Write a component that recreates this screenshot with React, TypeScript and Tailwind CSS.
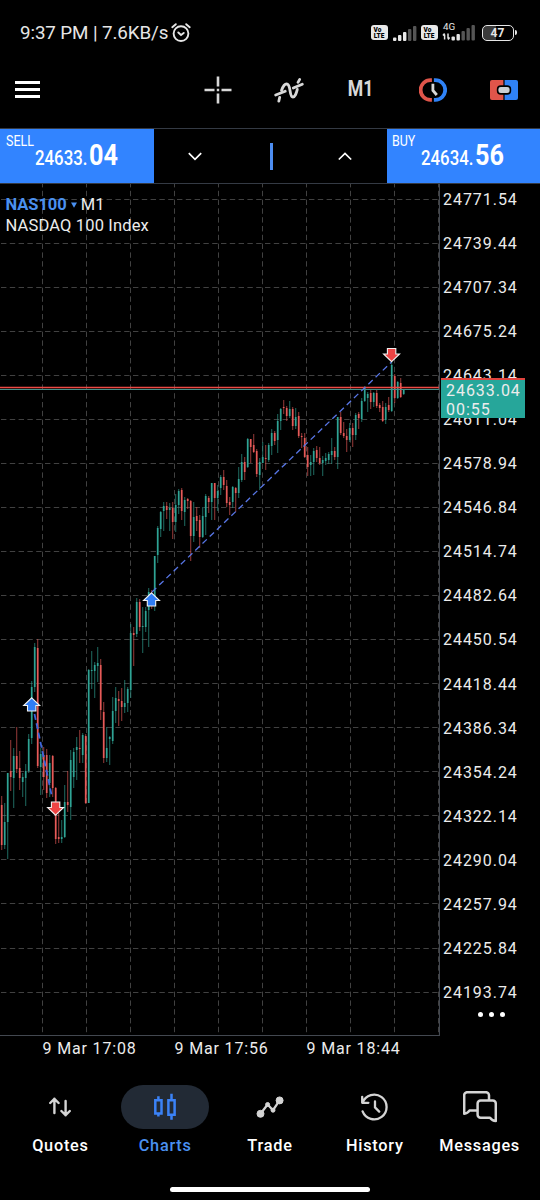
import type { ReactNode } from "react";

type Candle = ["u" | "d", number, number, number, number];

// direction, high, body top, body bottom, low
const CANDLES: Candle[] = [
  ["d", 796, 805, 845, 850], ["u", 803, 822, 845, 849], ["u", 773, 773, 822, 859],
  ["d", 740, 771, 777, 791], ["u", 748, 756, 778, 808], ["d", 727, 756, 769, 773],
  ["d", 751, 768, 778, 790], ["u", 773, 777, 782, 797], ["u", 764, 771, 778, 806],
  ["u", 734, 739, 771, 773], ["u", 681, 687, 738, 744], ["u", 643, 647, 687, 692],
  ["d", 639, 648, 766, 768], ["u", 748, 754, 767, 795], ["d", 747, 755, 777, 790],
  ["d", 749, 755, 793, 798], ["u", 755, 763, 783, 797], ["d", 755, 756, 788, 797],
  ["d", 787, 788, 839, 844], ["d", 813, 837, 839, 843], ["u", 820, 837, 839, 843],
  ["u", 785, 802, 837, 838], ["d", 771, 802, 805, 812], ["u", 750, 760, 807, 820],
  ["u", 748, 752, 777, 788], ["u", 737, 747, 750, 780], ["d", 730, 748, 749, 763],
  ["u", 733, 735, 755, 763], ["d", 734, 736, 803, 804], ["u", 669, 670, 803, 803],
  ["u", 651, 670, 671, 689], ["u", 662, 665, 671, 698], ["u", 647, 663, 666, 682],
  ["d", 659, 665, 710, 720], ["d", 702, 712, 758, 763], ["u", 727, 748, 758, 762],
  ["u", 736, 737, 739, 765], ["u", 697, 711, 741, 744], ["u", 687, 698, 711, 723],
  ["d", 691, 699, 701, 726], ["d", 688, 701, 707, 721], ["u", 680, 703, 707, 713],
  ["u", 687, 689, 703, 712], ["u", 624, 633, 690, 698], ["d", 627, 633, 635, 666],
  ["u", 598, 602, 634, 637], ["d", 599, 602, 627, 631], ["u", 607, 626, 627, 653],
  ["u", 607, 611, 627, 632], ["u", 588, 592, 610, 647], ["d", 590, 595, 606, 609],
  ["u", 556, 556, 606, 611], ["u", 526, 528, 555, 563], ["u", 511, 512, 529, 537],
  ["u", 502, 506, 511, 531], ["d", 502, 506, 510, 519], ["u", 503, 508, 510, 531],
  ["d", 502, 508, 522, 539], ["u", 494, 505, 522, 532], ["u", 489, 491, 505, 514],
  ["d", 488, 490, 511, 520], ["u", 497, 500, 512, 526], ["d", 498, 499, 501, 509],
  ["d", 500, 501, 536, 561], ["u", 502, 517, 536, 542], ["d", 507, 516, 521, 531],
  ["d", 515, 520, 537, 548], ["u", 507, 516, 537, 538], ["u", 494, 496, 517, 535],
  ["d", 496, 498, 502, 513], ["u", 483, 483, 502, 520], ["d", 483, 483, 498, 520],
  ["u", 485, 491, 498, 511], ["u", 475, 477, 488, 495], ["d", 470, 477, 485, 490],
  ["d", 480, 486, 503, 507], ["d", 497, 502, 505, 515], ["u", 486, 487, 502, 508],
  ["d", 487, 488, 493, 512], ["u", 467, 479, 493, 498], ["u", 454, 462, 480, 482],
  ["d", 457, 462, 472, 480], ["u", 438, 439, 467, 468], ["d", 439, 439, 447, 463],
  ["d", 434, 445, 452, 453], ["d", 449, 451, 474, 477], ["u", 458, 462, 475, 490],
  ["u", 442, 457, 463, 463], ["d", 445, 458, 459, 470], ["u", 443, 445, 460, 462],
  ["u", 429, 433, 446, 455], ["d", 431, 433, 441, 445], ["u", 414, 421, 440, 453],
  ["u", 408, 409, 421, 430], ["d", 400, 407, 408, 414], ["d", 406, 408, 416, 421],
  ["u", 401, 409, 416, 418], ["d", 407, 409, 426, 430], ["u", 408, 417, 426, 429],
  ["d", 412, 416, 436, 438], ["d", 433, 436, 437, 448], ["d", 433, 438, 457, 458],
  ["d", 447, 455, 467, 476], ["u", 455, 462, 465, 476], ["u", 448, 451, 462, 475],
  ["d", 446, 450, 458, 462], ["d", 447, 458, 463, 465], ["u", 456, 460, 463, 476],
  ["u", 453, 458, 461, 465], ["u", 452, 454, 460, 464], ["u", 438, 451, 455, 464],
  ["d", 447, 451, 457, 460], ["u", 417, 417, 457, 469], ["d", 412, 417, 433, 435],
  ["d", 422, 433, 436, 438], ["d", 429, 436, 440, 452], ["u", 423, 428, 440, 442],
  ["d", 423, 428, 435, 447], ["u", 413, 415, 435, 440], ["d", 412, 414, 418, 429],
  ["u", 398, 401, 419, 422], ["u", 386, 388, 401, 402], ["u", 392, 394, 398, 412],
  ["d", 390, 393, 402, 409], ["u", 392, 393, 402, 407], ["d", 389, 393, 406, 408],
  ["d", 403, 405, 408, 412], ["d", 401, 407, 421, 422], ["u", 403, 407, 420, 424],
  ["d", 397, 405, 410, 412], ["u", 361, 365, 411, 412], ["d", 374, 376, 398, 403],
  ["u", 381, 382, 398, 399], ["d", 378, 383, 397, 398], ["u", 389, 390, 394, 395],
];

const GRID_X = [42.5, 86.5, 130.5, 174.5, 218.5, 262.5, 306.5, 350.5, 394.5, 438.5];

const PRICES = [
  "24771.54", "24739.44", "24707.34", "24675.24", "24643.14", "24611.04", "24578.94",
  "24546.84", "24514.74", "24482.64", "24450.54", "24418.44", "24386.34", "24354.24",
  "24322.14", "24290.04", "24257.94", "24225.84", "24193.74",
];

function Signal({ level, className }: { level: number; className?: string }) {
  return (
    <svg width="24" height="16" viewBox="0 0 24 16" className={className}>
      {[3.5, 6, 9, 12, 15].map((h, i) => (
        <rect key={i} x={i * 5} y={16 - h} width="3.4" height={h} rx="1" fill={i < level ? "#e8e8e8" : "#555"} />
      ))}
    </svg>
  );
}

function VoLte() {
  return (
    <div className="flex h-[15px] w-[17px] flex-col items-center justify-center rounded-[3px] bg-[#e8e8e8] text-[6.5px] leading-[6px] font-black text-black">
      <span className="-ml-[3px]">Vo</span>
      <span>LTE</span>
    </div>
  );
}

function StatusBar() {
  return (
    <div className="flex h-[65px] items-center justify-between pl-5 pr-[23.5px] text-[#e6e6e6]">
      <div className="flex items-center pt-px">
        <span className="text-[18.8px] tracking-[-0.1px]">9:37 PM | 7.6KB/s</span>
        <svg width="20" height="20" viewBox="0 0 20 20" className="ml-[3px]" fill="none" stroke="currentColor" strokeWidth="1.9" strokeLinecap="round">
          <circle cx="10" cy="10.6" r="7.4" />
          <path d="M1.3 4.2 4.8 1.2M18.7 4.2 15.2 1.2M7.3 9.5 10 12l2.7-2.1" />
        </svg>
      </div>
      <div className="flex items-center">
        <VoLte />
        <Signal level={3} className="ml-[5px]" />
        <div className="ml-[4px]">
          <VoLte />
        </div>
        <svg width="35" height="20" viewBox="0 0 35 20" className="-mt-[3px] ml-[4px]">
          <text x="1" y="9" fontSize="9.8" fill="#e6e6e6">4G</text>
          <path d="M2.6 18.5v-5M1 14.5l1.6-2M6 12.5v5M6 18.5l1.6-2" stroke="#e6e6e6" strokeWidth="1.5" fill="none" />
          <rect x="9.5" y="15.5" width="3.4" height="4" rx="1" fill="#e6e6e6" />
          <rect x="14.5" y="13" width="3.4" height="6.5" rx="1" fill="#e6e6e6" />
          <rect x="19.5" y="10" width="3.4" height="9.5" rx="1" fill="#555" />
          <rect x="24.5" y="7" width="3.4" height="12.5" rx="1" fill="#555" />
          <rect x="29.5" y="4" width="3.4" height="15.5" rx="1" fill="#555" />
        </svg>
        <div className="ml-[5px] flex h-4 w-[32px] items-center justify-center rounded-[5px] border-[1.5px] border-[#e6e6e6] bg-linear-to-r from-[#3a3a3a] from-45% to-black to-45% text-[12px] leading-none font-bold">
          47
        </div>
        <div className="ml-px h-[5px] w-[2px] rounded-r bg-[#e6e6e6]" />
      </div>
    </div>
  );
}

function Toolbar() {
  return (
    <div className="flex h-[63px] items-center pb-[14px] text-[#d8d8d8]">
      <div className="flex w-[182px] pl-[15px]">
        <div className="flex w-[25px] flex-col gap-[4px]">
          <div className="h-[3px] bg-white" />
          <div className="h-[3px] bg-white" />
          <div className="h-[3px] bg-white" />
        </div>
      </div>
      <div className="grid flex-1 grid-cols-5 place-items-center">
        <svg width="28" height="28" viewBox="0 0 28 28" fill="none" stroke="currentColor" strokeWidth="2.6">
          <path d="M14 .5v10M14 17.5v10M.5 14h10M17.5 14h10M12.8 14h2.4" />
        </svg>
        <svg width="30" height="26" viewBox="0 0 30 26" fill="none" stroke="currentColor" strokeWidth="2.8" strokeLinecap="round" strokeLinejoin="round">
          <path d="M1.7 18 11.2 14.3M19.3 11 28.3 7.2" />
          <path d="M4.8 24.2 5.7 20.3M7.5 13.5C9 9.2 10.8 7 12.6 7c4.8 0 2.3 13 6.3 13 2.4 0 3.3-3.6 4.4-7.6M24 5.4l1.7-3" />
        </svg>
        <span className="scale-x-[0.82] text-[21.5px] font-bold">M1</span>
        <svg width="28" height="24" viewBox="0 0 28 24" fill="none">
          <path d="M12.9 2.1h-1.4a9.9 9.9 0 0 0 0 19.8h1.4" stroke="#e0554a" strokeWidth="3.8" />
          <path d="M14.9 2.1h1.4a9.9 9.9 0 0 1 0 19.8h-1.4" stroke="#2f82f6" strokeWidth="3.8" />
          <path d="M13.9 5.8v6.6l3.9 4.6" stroke="#d8d8d8" strokeWidth="2.8" />
        </svg>
        <svg width="28" height="20" viewBox="0 0 28 20">
          <path d="M13.4 0H2a2 2 0 0 0-2 2v16a2 2 0 0 0 2 2h11.4z" fill="#e0554a" />
          <path d="M14.6 0H26a2 2 0 0 1 2 2v16a2 2 0 0 1-2 2H14.6z" fill="#2f82f6" />
          <rect x="7.6" y="6.1" width="12.8" height="7.8" rx="3.2" fill="#c9cfd4" stroke="#000" strokeWidth="1.6" />
        </svg>
      </div>
    </div>
  );
}

function PriceButton({ label, whole, cents }: { label: string; whole: string; cents: string }) {
  return (
    <button className="relative h-full w-[153.5px] bg-[#3284ff] text-white">
      <span className="absolute top-[6px] left-[5.5px] origin-left scale-x-[0.86] text-[14.5px] leading-[14px]">{label}</span>
      <span className="absolute top-[10px] left-[34.5px] flex origin-left scale-x-[0.84] items-baseline leading-8">
        <span className="text-[20px] font-medium">{whole}</span>
        <span className="ml-[2px] text-[30px] font-bold">{cents}</span>
      </span>
    </button>
  );
}

function TradeBar() {
  return (
    <div className="flex h-14 items-center justify-between border-y border-[#343a44]">
      <PriceButton label="SELL" whole="24633." cents="04" />
      <div className="flex flex-1 items-center pl-[34px]">
        <svg width="14" height="9" viewBox="0 0 14 9" fill="none" stroke="white" strokeWidth="1.7">
          <path d="M.8 1.2 7 7.3l6.2-6.1" />
        </svg>
        <div className="ml-[68px] h-[27px] w-[3px] bg-[#4d8df0]" />
        <svg width="14" height="9" viewBox="0 0 14 9" fill="none" stroke="white" strokeWidth="1.7" className="ml-[65px]">
          <path d="M.8 7.5 7 1.4l6.2 6.1" />
        </svg>
      </div>
      <PriceButton label="BUY" whole="24634." cents="56" />
    </div>
  );
}

function TradeMarker({ x, y, side }: { x: number; y: number; side: "buy" | "sell" }) {
  return (
    <path
      transform={`translate(${x} ${y}) scale(1 ${side === "buy" ? 1 : -1})`}
      d="M0 .3 8 8H4.2v5.5h-8.4V8H-8z"
      fill={side === "buy" ? "#2f7df6" : "#ee4444"}
      stroke="#f2f2f2"
      strokeWidth="1.1"
    />
  );
}

function CandleChart() {
  return (
    <svg width="440" height="852" viewBox="0 184 440 852" className="block shrink-0">
      <g stroke="#414141" strokeWidth="1" strokeDasharray="5.4 3.4">
        {GRID_X.map((x) => (
          <line key={x} x1={x} x2={x} y1="182" y2="1036" />
        ))}
        {PRICES.map((p, i) => (
          <line key={p} x1="1" x2="440" y1={199.5 + Math.round(i * 44.03)} y2={199.5 + Math.round(i * 44.03)} />
        ))}
      </g>
      {CANDLES.map(([dir, high, top, bottom, low], i) => {
        const x = 1.7 + i * 3;
        const color = dir === "u" ? "#2fa394" : "#e65a58";
        return (
          <g key={i} stroke={color}>
            <line x1={x} x2={x} y1={high} y2={low} strokeWidth="1.1" opacity="0.6" />
            <line x1={x} x2={x} y1={top} y2={Math.max(bottom, top + 1)} strokeWidth="1.7" />
          </g>
        );
      })}
      <line x1="0" x2="440" y1="387.5" y2="387.5" stroke="#ec4a44" strokeWidth="1.6" />
      <line x1="0" x2="440" y1="389.5" y2="389.5" stroke="#43918a" strokeWidth="1" />
      <line x1="34.5" y1="714" x2="52" y2="797" stroke="#3f66dc" strokeWidth="1.8" strokeDasharray="6 3.5" />
      <line x1="152" y1="592" x2="391.5" y2="362" stroke="#5876e6" strokeWidth="1.3" strokeDasharray="6 4" />
      <TradeMarker x={31.7} y={697.5} side="buy" />
      <TradeMarker x={55.6} y={815.5} side="sell" />
      <TradeMarker x={151.5} y={592.5} side="buy" />
      <TradeMarker x={391.6} y={362} side="sell" />
      <path d="M439.5 184v851.5H0" fill="none" stroke="#434850" strokeWidth="1.2" />
    </svg>
  );
}

function ChartPanel() {
  return (
    <div className="relative flex h-[852px] text-[#ececec]">
      <CandleChart />
      <div className="-mt-[6px] flex flex-col pl-[3px]">
        {PRICES.map((p) => (
          <div key={p} className="flex h-[44.05px] shrink-0 items-center text-[16px] tracking-[0.95px]">
            {p}
          </div>
        ))}
      </div>
      <div className="absolute top-[10px] left-[5.5px] text-[16.5px] leading-[21px] tracking-[0.15px]">
        <div className="flex items-center">
          <span className="font-bold tracking-[-0.05px] text-[#4a90f0]">NAS100</span>
          <svg width="6" height="6" viewBox="0 0 6 6" className="mx-[4px]">
            <path d="M0 .5h6L3 5.8z" fill="#4a90f0" />
          </svg>
          <span>M1</span>
        </div>
        <div>NASDAQ 100 Index</div>
      </div>
      <div className="absolute top-[194px] left-[441px] h-10 w-[84px] border-t-2 border-[#e0443e] bg-[#26a69a] pt-px pl-[5px] text-[16px] leading-[19px] tracking-[0.95px]">
        <div>24633.04</div>
        <div>00:55</div>
      </div>
      <div className="absolute top-[827.5px] left-[478px] flex gap-[6px]">
        <div className="size-[5px] rounded-full bg-white" />
        <div className="size-[5px] rounded-full bg-white" />
        <div className="size-[5px] rounded-full bg-white" />
      </div>
    </div>
  );
}

function TimeAxis() {
  return (
    <div className="flex h-[24px] items-center pt-px pl-[42.5px] text-[16px] tracking-[0.85px] text-[#ececec]">
      <span className="w-[132px]">9 Mar 17:08</span>
      <span className="w-[132px]">9 Mar 17:56</span>
      <span>9 Mar 18:44</span>
    </div>
  );
}

function NavItem({ label, active, children }: { label: string; active?: boolean; children: ReactNode }) {
  return (
    <div className={active ? "flex flex-1 flex-col items-center text-[#4a90f0]" : "flex flex-1 flex-col items-center text-white"}>
      <div
        className={
          active
            ? "flex h-11 w-[88px] items-center justify-center rounded-full bg-[#222a35] text-[#3b82f6]"
            : "flex h-11 w-[88px] items-center justify-center text-[#d4d4d4]"
        }
      >
        {children}
      </div>
      <span className="mt-[5px] text-[16.3px] leading-6 font-medium tracking-[0.75px]">{label}</span>
    </div>
  );
}

function BottomNav() {
  return (
    <div className="flex px-2 pt-[24.5px]">
      <NavItem label="Quotes">
        <svg width="22" height="20" viewBox="0 0 22 20" fill="none" stroke="currentColor" strokeWidth="2.4" strokeLinecap="round" strokeLinejoin="round">
          <path d="M5.4 16V1.8M1.2 6l4.2-4.2L9.6 6M16.6 4v14.2M12.4 14l4.2 4.2 4.2-4.2" />
        </svg>
      </NavItem>
      <NavItem label="Charts" active>
        <svg width="22" height="28" viewBox="0 0 22 28" fill="none" stroke="currentColor" strokeWidth="2.5">
          <path d="M1.3 7.2h6.2v13.4H1.3zM4.4 3.2v4M4.4 20.6v3M14.4 7.2h6.2v14.6h-6.2zM17.5.8v6.4M17.5 21.8v5" />
        </svg>
      </NavItem>
      <NavItem label="Trade">
        <svg width="28" height="24" viewBox="0 0 28 24" fill="currentColor" stroke="currentColor">
          <path d="M4.5 18.8 11.6 9.5 17 15.2 23.6 5.4" fill="none" strokeWidth="2.3" />
          <circle cx="4.5" cy="18.8" r="3.5" />
          <circle cx="11.6" cy="9.5" r="2" />
          <circle cx="17" cy="15.2" r="2" />
          <circle cx="23.6" cy="5.4" r="3.5" />
        </svg>
      </NavItem>
      <NavItem label="History">
        <svg width="28" height="28" viewBox="0 0 28 28" fill="none" stroke="currentColor" strokeWidth="2.3" strokeLinecap="round" strokeLinejoin="round">
          <path d="M1.2 3.8v6h6.2M1.6 9.6A12.4 12.4 0 1 1 1.6 18.4M14 8.4v6l4.2 4.2" />
        </svg>
      </NavItem>
      <NavItem label="Messages">
        <svg width="34" height="32" viewBox="0 0 34 32" fill="none" stroke="currentColor" strokeWidth="2.5" strokeLinejoin="round">
          <path d="M26 9V4.2a3 3 0 0 0-3-3H4.2a3 3 0 0 0-3 3v18.6q3.4-.4 5.2-3.2h8" />
          <path d="M17.6 9.6h12.2a3 3 0 0 1 3 3v17.4q-3.6-.2-5.800-3.2h-9.400a3 3 0 0 1-3-3V12.6a3 3 0 0 1 3-3z" />
        </svg>
      </NavItem>
    </div>
  );
}

export default function App() {
  return (
    <div className="flex h-[1200px] w-[540px] flex-col overflow-hidden bg-black font-[Roboto,'Liberation_Sans',sans-serif]">
      <StatusBar />
      <Toolbar />
      <TradeBar />
      <ChartPanel />
      <TimeAxis />
      <BottomNav />
      <div className="mx-auto mt-auto mb-[8px] h-[5px] w-[200px] rounded-full bg-white" />
    </div>
  );
}
